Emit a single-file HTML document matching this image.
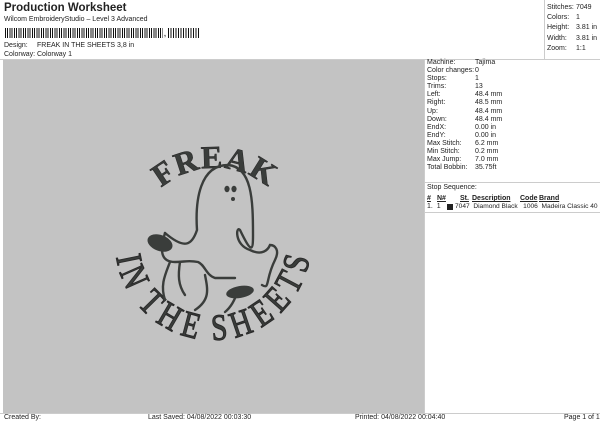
<!DOCTYPE html>
<html><head><style>
body{margin:0;width:600px;height:424px;background:#fff;font-family:"Liberation Sans",sans-serif;position:relative;overflow:hidden;color:#222}
.a{position:absolute;font-size:7px;white-space:nowrap;line-height:8.1px}
</style></head><body>
<div class="a" style="left:4px;top:1px;font-size:11.5px;font-weight:bold;line-height:14px">Production Worksheet</div>
<div class="a" style="left:4px;top:16px">Wilcom EmbroideryStudio – Level 3 Advanced</div>
<div style="position:absolute;left:5px;top:28px;width:158px;height:10px;background:repeating-linear-gradient(90deg,#111 0 1px,#fff 1px 2px,#111 2px 3px,#fff 3px 4.5px)"></div>
<div class="a" style="left:164px;top:31px;font-weight:bold">,</div>
<div style="position:absolute;left:168px;top:28px;width:32px;height:10px;background:repeating-linear-gradient(90deg,#111 0 1px,#fff 1px 2.5px)"></div>
<div class="a" style="left:4px;top:42px">Design:</div><div class="a" style="left:37px;top:42px">FREAK IN THE SHEETS 3,8 in</div>
<div class="a" style="left:4px;top:51px">Colorway:</div><div class="a" style="left:37px;top:51px">Colorway 1</div>
<div style="position:absolute;left:0;top:59px;width:600px;border-top:1px solid #ccc"></div>
<div style="position:absolute;left:544px;top:0;height:59px;border-left:1px solid #ccc"></div>
<div class="a" style="left:547px;top:3px;line-height:10.2px">Stitches:<br>Colors:<br>Height:<br>Width:<br>Zoom:</div>
<div class="a" style="left:576px;top:3px;line-height:10.2px">7049<br>1<br>3.81 in<br>3.81 in<br>1:1</div>
<div style="position:absolute;left:3px;top:60px;width:421px;height:353px;background:#c3c3c3"></div>
<div style="position:absolute;left:424px;top:60px;height:353px;border-left:1px solid #ccc"></div>
<div class="a" style="left:427px;top:59px">Machine:<br>Color changes:<br>Stops:<br>Trims:<br>Left:<br>Right:<br>Up:<br>Down:<br>EndX:<br>EndY:<br>Max Stitch:<br>Min Stitch:<br>Max Jump:<br>Total Bobbin:</div>
<div class="a" style="left:475px;top:59px">Tajima<br>0<br>1<br>13<br>48.4 mm<br>48.5 mm<br>48.4 mm<br>48.4 mm<br>0.00 in<br>0.00 in<br>6.2 mm<br>0.2 mm<br>7.0 mm<br>35.75ft</div>
<div style="position:absolute;left:424px;top:182px;width:176px;border-top:1px solid #ccc"></div>
<div class="a" style="left:427px;top:184px">Stop Sequence:</div>
<div class="a" style="left:427px;top:195px;font-weight:bold;text-decoration:underline">#</div>
<div class="a" style="left:437px;top:195px;font-weight:bold;text-decoration:underline">N#</div>
<div class="a" style="left:460px;top:195px;font-weight:bold;text-decoration:underline">St.</div>
<div class="a" style="left:472px;top:195px;font-weight:bold;text-decoration:underline">Description</div>
<div class="a" style="left:520px;top:195px;font-weight:bold;text-decoration:underline">Code</div>
<div class="a" style="left:539px;top:195px;font-weight:bold;text-decoration:underline">Brand</div>
<div class="a" style="left:427px;top:203px">1.&nbsp; 1</div>
<div style="position:absolute;left:447px;top:204px;width:6px;height:6px;background:#222"></div>
<div class="a" style="left:455px;top:203px;font-size:6.6px">7047&nbsp; Diamond Black&nbsp;&nbsp; 1006&nbsp; Madeira Classic 40</div>
<div style="position:absolute;left:424px;top:212px;width:176px;border-top:1px solid #ccc"></div>
<div style="position:absolute;left:0;top:413px;width:600px;border-top:1px solid #ccc"></div>
<div class="a" style="left:4px;top:414px">Created By:</div>
<div class="a" style="left:148px;top:414px">Last Saved: 04/08/2022 00:03:30</div>
<div class="a" style="left:355px;top:414px">Printed: 04/08/2022 00:04:40</div>
<div class="a" style="left:564px;top:414px">Page 1 of 1</div>
<svg style="position:absolute;left:0;top:0" width="600" height="424">
<defs>
<path id="top" d="M133,250 A82,82 0 0 1 297,250"/>
<path id="bot" d="M141,242 A72,72 0 0 0 285,242"/>
</defs>
<text font-family="Liberation Serif,serif" font-size="32" font-weight="bold" fill="#3a3d3b" stroke="#2a2a2a" stroke-width=".6"><textPath href="#top" startOffset="50%" text-anchor="middle" letter-spacing="1">FREAK</textPath></text>
<text font-family="Liberation Serif,serif" font-size="37" fill="#3a3d3b" stroke="#2a2a2a" stroke-width="1.1" dominant-baseline="hanging"><textPath href="#bot" startOffset="50%" text-anchor="middle" textLength="206" lengthAdjust="spacingAndGlyphs">IN THE SHEETS</textPath></text>
<g fill="none" stroke="#3a3d3b" stroke-width="2.4" stroke-linecap="round">
<path d="M197,230 C195,200 200,165 228,165 C252,167 253,200 253,235 C253,250 252,255 240,230 M240,230 C236,225 234,245 250,250 C262,256 268,250 270,245 C275,245 280,250 275,260 C265,280 270,290 262,285 M197,230 C192,245 185,250 165,233"/>
<path d="M165,233 C160,250 160,262 175,262 C185,262 188,260 198,262 C205,265 206,275 215,278 L235,278"/>
<path d="M170,262 C165,275 160,285 165,300 M180,262 C178,275 178,285 185,295 M205,275 C208,290 210,300 195,310 M238,290 C235,300 230,308 225,312"/>
</g>
<g fill="#3a3d3b"><ellipse cx="227" cy="189" rx="2.6" ry="3.2"/><ellipse cx="234" cy="189" rx="2.6" ry="3.2"/><circle cx="233" cy="199" r="2"/>
<ellipse cx="160" cy="243" rx="13" ry="8" transform="rotate(20 160 243)"/><ellipse cx="240" cy="292" rx="14" ry="6" transform="rotate(-10 240 292)"/></g>
</svg>
</body></html>
